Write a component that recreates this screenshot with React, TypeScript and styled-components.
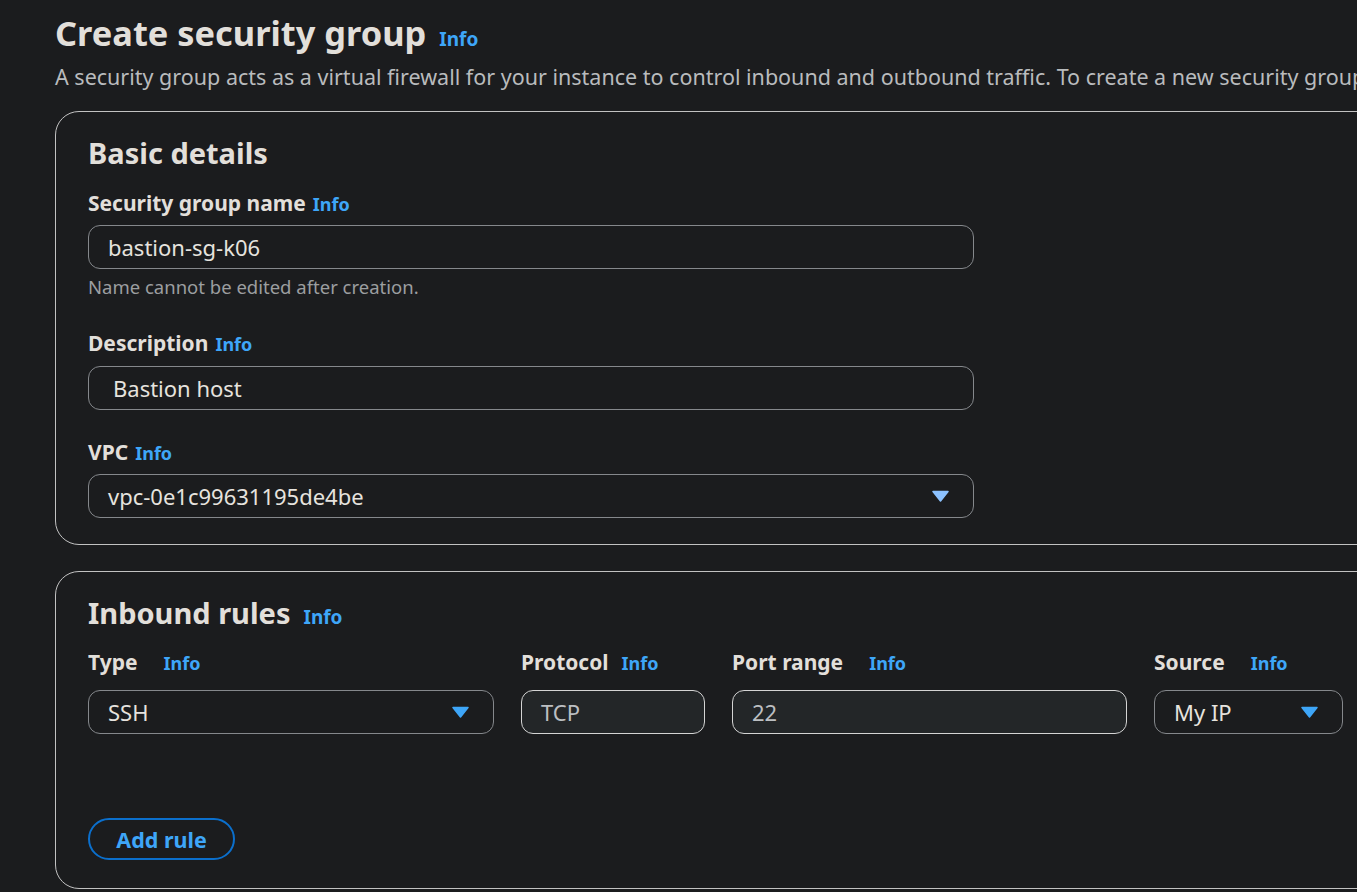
import React from "react";
import styled, { createGlobalStyle } from "styled-components";

const Global = createGlobalStyle`
  html, body { margin: 0; padding: 0; background: #1b1c1e; overflow: hidden; }
  body { font-family: "Noto Sans", "Open Sans", Arial, sans-serif; color: #e2dfda; }
  * { box-sizing: border-box; }
`;

const Page = styled.div`
  padding: 11px 0 0 55px;
  width: 1357px;
  height: 892px;
  overflow: hidden;
`;

const TitleRow = styled.div`
  display: flex;
  align-items: baseline;
  gap: 13px;
  height: 44px;
  line-height: 44px;
`;

const Title = styled.h1`
  margin: 0;
  font-size: 34.4px;
  font-weight: 700;
  color: #e2dfda;
`;

const InfoLink = styled.a<{ $size?: number; $ml?: number }>`
  color: #3ea6f8;
  font-weight: 700;
  font-size: ${(p) => p.$size ?? 18}px;
  margin-left: ${(p) => p.$ml ?? 0}px;
  text-decoration: none;
  cursor: pointer;
`;

const Lead = styled.p`
  margin: 8px 0 0;
  height: 28px;
  font-size: 21.5px;
  line-height: 28px;
  color: #b9bbbd;
  white-space: nowrap;
`;

const Card = styled.section<{ $mt: number; $pb: number }>`
  margin-top: ${(p) => p.$mt}px;
  margin-right: -60px;
  border: 1px solid #c2c2c2;
  border-radius: 24px;
  padding: 23px 32px ${(p) => p.$pb}px 32px;
  display: flex;
  flex-direction: column;
`;

const CardHeading = styled.h2`
  margin: 0;
  height: 36px;
  display: flex;
  align-items: baseline;
  gap: 13px;
  font-size: 29px;
  line-height: 36px;
  font-weight: 700;
  color: #e2dfda;
`;

const Label = styled.div<{ $mt: number }>`
  margin-top: ${(p) => p.$mt}px;
  height: 28px;
  display: flex;
  align-items: baseline;
  gap: 7px;
  font-size: 21px;
  line-height: 28px;
  font-weight: 700;
  color: #e2dfda;
  white-space: nowrap;
`;

const FieldBox = styled.div<{ $mt?: number; $width?: number; $readonly?: boolean; $pl?: number }>`
  margin-top: ${(p) => p.$mt ?? 0}px;
  width: ${(p) => (p.$width ? `${p.$width}px` : "100%")};
  height: 44px;
  border-radius: 12px;
  border: 1px solid ${(p) => (p.$readonly ? "#d4d4d4" : "#85888c")};
  background: ${(p) => (p.$readonly ? "#232628" : "#1b1c1e")};
  display: flex;
  align-items: center;
  justify-content: space-between;
  padding: 0 24px 0 ${(p) => p.$pl ?? 19}px;
  font-size: 22px;
  color: ${(p) => (p.$readonly ? "#bcbfc2" : "#e6e3de")};
`;

const Hint = styled.div`
  margin-top: 7px;
  height: 22px;
  font-size: 18.5px;
  line-height: 22px;
  color: #9c9ea0;
`;

const RulesGrid = styled.div`
  margin-top: 17px;
  display: grid;
  grid-template-columns: 406px 184px 395px 189px;
  grid-template-rows: 28px 44px;
  column-gap: 27px;
  row-gap: 14px;
`;

const ColLabel = styled.div`
  display: flex;
  align-items: baseline;
  height: 28px;
  font-size: 21px;
  line-height: 28px;
  font-weight: 700;
  color: #e2dfda;
  white-space: nowrap;
`;

const AddButton = styled.button`
  margin-top: 84px;
  align-self: flex-start;
  width: 147px;
  height: 42px;
  border-radius: 21px;
  border: 2.5px solid #0b6fcc;
  background: transparent;
  color: #3ea6f8;
  font-family: inherit;
  font-size: 21.5px;
  font-weight: 700;
  cursor: pointer;
`;

const Caret = ({ color }: { color: string }) => (
  <svg width="17" height="12" viewBox="0 0 17 12" aria-hidden="true">
    <path d="M1 1.5 L16 1.5 L8.5 11 Z" fill={color} stroke={color} strokeWidth="1.5" strokeLinejoin="round" />
  </svg>
);

export default function App() {
  return (
    <>
      <Global />
      <Page>
        <TitleRow>
          <Title>Create security group</Title>
          <InfoLink $size={19}>Info</InfoLink>
        </TitleRow>
        <Lead>
          A security group acts as a virtual firewall for your instance to control inbound and outbound traffic. To create a new security group
        </Lead>

        <Card $mt={20} $pb={26}>
          <CardHeading>Basic details</CardHeading>
          <Label $mt={18}>
            Security group name <InfoLink>Info</InfoLink>
          </Label>
          <FieldBox $mt={8} $width={886}>bastion-sg-k06</FieldBox>
          <Hint>Name cannot be edited after creation.</Hint>
          <Label $mt={31}>
            Description <InfoLink>Info</InfoLink>
          </Label>
          <FieldBox $mt={9} $width={886} $pl={24}>Bastion host</FieldBox>
          <Label $mt={28}>
            VPC <InfoLink>Info</InfoLink>
          </Label>
          <FieldBox $mt={8} $width={886}>
            <span>vpc-0e1c99631195de4be</span>
            <Caret color="#8cc2ff" />
          </FieldBox>
        </Card>

        <Card $mt={26} $pb={28}>
          <CardHeading>
            Inbound rules <InfoLink $size={19}>Info</InfoLink>
          </CardHeading>
          <RulesGrid>
            <ColLabel>
              Type <InfoLink $ml={26}>Info</InfoLink>
            </ColLabel>
            <ColLabel>
              Protocol <InfoLink $ml={13}>Info</InfoLink>
            </ColLabel>
            <ColLabel>
              Port range <InfoLink $ml={26}>Info</InfoLink>
            </ColLabel>
            <ColLabel>
              Source <InfoLink $ml={26}>Info</InfoLink>
            </ColLabel>
            <FieldBox>
              <span>SSH</span>
              <Caret color="#3ea6f8" />
            </FieldBox>
            <FieldBox $readonly>TCP</FieldBox>
            <FieldBox $readonly>22</FieldBox>
            <FieldBox>
              <span>My IP</span>
              <Caret color="#3ea6f8" />
            </FieldBox>
          </RulesGrid>
          <AddButton>Add rule</AddButton>
        </Card>
      </Page>
    </>
  );
}
